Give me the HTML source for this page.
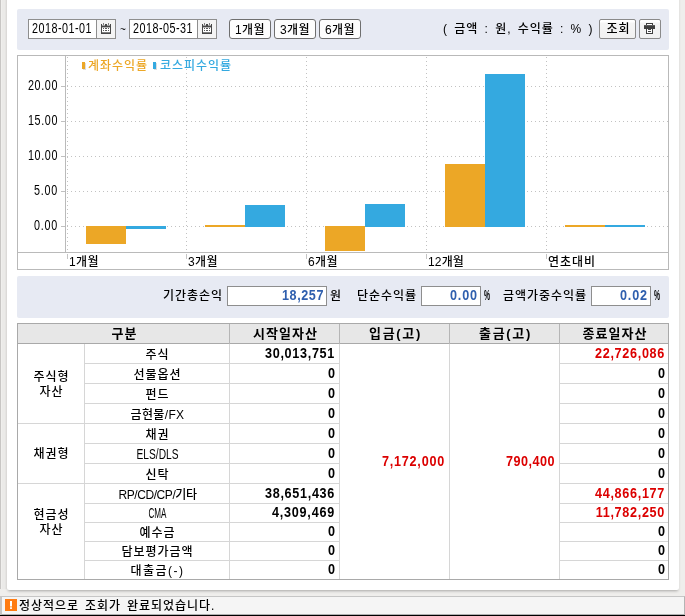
<!DOCTYPE html>
<html lang="ko">
<head>
<meta charset="utf-8">
<title>수익률 조회</title>
<style>
*{box-sizing:border-box;margin:0;padding:0}
html,body{width:685px;height:616px;overflow:hidden;background:#efeeec}
body{position:relative;font:500 12px/14px "Liberation Sans","Noto Sans CJK KR",sans-serif;color:#000;will-change:transform}
.abs,.t,.box,.btn,.bar,.ln,.cal,.dh,.dv,.panel{position:absolute}
.t{white-space:nowrap;height:14px;line-height:14px;letter-spacing:.96px}
.d{font-size:14px}
.b{font-weight:bold}
.h{font-size:13px}
.c{text-align:center}
.r{text-align:right}
.panel{left:17px;width:652px;background:#e7eaf3;border-radius:2px}
.box{background:#fff;border:1px solid #8e8e8e;height:20px}
.btn{height:20px;border:1px solid #6f6f6f;border-radius:3px;background:#fdfdfd}
.btn.g{border-color:#8a8a8a;border-radius:2px;background:linear-gradient(#fff,#fff 2px,#f5f5f5 3px,#f1f1f1)}
.cal{width:19px;height:20px;border:1px solid #8e8e8e;border-left:0;background:#f4f4f4}
.or{background:#eca726}.bl{background:#34a9e0}
.red{color:#dc0000}.blue{color:#2f5fae}
.dh{height:1px;background:repeating-linear-gradient(90deg,#c2c2c2 0,#c2c2c2 1px,transparent 1px,transparent 4px)}
.dv{width:1px;background:repeating-linear-gradient(180deg,#c2c2c2 0,#c2c2c2 1px,transparent 1px,transparent 4px)}
</style>
</head>
<body>
<div class="abs" style="left:7px;top:-6px;width:672px;height:596px;background:#fff;border-radius:2px;box-shadow:0 2px 3px -1px rgba(0,0,0,.3)"></div>
<div class="abs" style="left:0;top:0;width:7px;height:589px;background:linear-gradient(90deg,#c8c6c4 0,#c8c6c4 1px,#f0efed 1px,#f0efed 2px,#ebeae8 2px,#ebeae8 5px,#e5e4e2 5px,#e5e4e2 6px,#dcdad8 6px)"></div>
<div class="abs" style="left:0;top:596px;width:1px;height:20px;background:#c8c6c4"></div>
<div class="panel" style="top:9px;height:41px"></div>
<div class="box" style="left:28px;top:19px;width:69px"></div>
<div class="t d" style="left:32px;top:21px;width:79.92px;letter-spacing:0.63px;transform:scaleX(0.770);transform-origin:0 50%;">2018-01-01</div>
<div class="cal" style="left:97px;top:19px"></div>
<div class="box" style="left:129px;top:19px;width:69px"></div>
<div class="t d" style="left:133px;top:21px;width:79.92px;letter-spacing:0.63px;transform:scaleX(0.770);transform-origin:0 50%;">2018-05-31</div>
<div class="cal" style="left:198px;top:19px"></div>
<svg class="abs" style="left:101px;top:23px" width="10" height="11" viewBox="0 0 10 11"><path fill="#808080" d="M2 0h1v2H2zM7 0h1v2H7z"/><path fill="#484848" d="M0 1h1v1.6h8V1h1v10H0zM4 1h2v2H4z"/><path fill="#fff" d="M1 4.4h8v4.9H1z"/><path fill="#5a5a5a" d="M2 5h1v1H2zM4 5h2v1H4zM7 5h1v1H7zM2 7h1v1H2zM4 7h2v1H4zM7 7h1v1H7z"/></svg>
<svg class="abs" style="left:202px;top:23px" width="10" height="11" viewBox="0 0 10 11"><path fill="#808080" d="M2 0h1v2H2zM7 0h1v2H7z"/><path fill="#484848" d="M0 1h1v1.6h8V1h1v10H0zM4 1h2v2H4z"/><path fill="#fff" d="M1 4.4h8v4.9H1z"/><path fill="#5a5a5a" d="M2 5h1v1H2zM4 5h2v1H4zM7 5h1v1H7zM2 7h1v1H2zM4 7h2v1H4zM7 7h1v1H7z"/></svg>
<div class="t" style="left:120px;top:23px;letter-spacing:0;font-size:10px">~</div>
<div class="btn" style="left:229px;top:19px;width:42px"></div>
<div class="t" style="left:235px;top:23px;letter-spacing:0.42px;">1개월</div>
<div class="btn" style="left:274px;top:19px;width:42px"></div>
<div class="t" style="left:280px;top:23px;letter-spacing:0.42px;">3개월</div>
<div class="btn" style="left:319px;top:19px;width:42px"></div>
<div class="t" style="left:325px;top:23px;letter-spacing:0.42px;">6개월</div>
<div class="t" style="left:443px;top:22px;word-spacing:2px">( 금액 : 원, 수익률 : % )</div>
<div class="btn g" style="left:599px;top:19px;width:37px"></div>
<div class="t c" style="left:600px;top:22px;width:37px;letter-spacing:0.96px;">조회</div>
<div class="btn g" style="left:639px;top:19px;width:22px"></div>
<svg class="abs" style="left:644px;top:23px" width="11" height="11" viewBox="0 0 11 11"><path fill="#404040" d="M2 0h7v2h2v4H9v5H2V6H0V2h2z"/><path fill="#fff" d="M3 1h5v1H3zM3 6h5v4H3z"/><path fill="#464646" d="M4 6h3v1H4zM4 8h3v1H4z"/><path fill="#5c5c5c" d="M0 2h11v1H0z"/></svg>
<div class="abs" style="left:17px;top:55px;width:652px;height:215px;border:1px solid #b9b9b9;background:#fff"></div>
<div class="ln" style="left:65px;top:56px;width:1px;height:197px;background:#bababa"></div>
<div class="ln" style="left:18px;top:252px;width:650px;height:1px;background:#bababa"></div>
<div class="ln" style="left:61px;top:86px;width:4px;height:1px;background:#c0c0c0"></div>
<div class="dh" style="left:67px;top:86px;width:601px"></div>
<div class="t d r" style="left:8px;top:78px;width:50px;letter-spacing:0.79px;transform:scaleX(0.770);transform-origin:100% 50%;">20.00</div>
<div class="ln" style="left:61px;top:121px;width:4px;height:1px;background:#c0c0c0"></div>
<div class="dh" style="left:67px;top:121px;width:601px"></div>
<div class="t d r" style="left:8px;top:113px;width:50px;letter-spacing:0.79px;transform:scaleX(0.770);transform-origin:100% 50%;">15.00</div>
<div class="ln" style="left:61px;top:156px;width:4px;height:1px;background:#c0c0c0"></div>
<div class="dh" style="left:67px;top:156px;width:601px"></div>
<div class="t d r" style="left:8px;top:148px;width:50px;letter-spacing:0.79px;transform:scaleX(0.770);transform-origin:100% 50%;">10.00</div>
<div class="ln" style="left:61px;top:191px;width:4px;height:1px;background:#c0c0c0"></div>
<div class="dh" style="left:67px;top:191px;width:601px"></div>
<div class="t d r" style="left:8px;top:183px;width:50px;letter-spacing:0.98px;transform:scaleX(0.770);transform-origin:100% 50%;">5.00</div>
<div class="ln" style="left:61px;top:226px;width:4px;height:1px;background:#c0c0c0"></div>
<div class="dh" style="left:67px;top:226px;width:601px"></div>
<div class="t d r" style="left:8px;top:218px;width:50px;letter-spacing:0.98px;transform:scaleX(0.770);transform-origin:100% 50%;">0.00</div>
<div class="dv" style="left:67px;top:57px;height:195px"></div>
<div class="ln" style="left:67px;top:254px;width:1px;height:5px;background:#c4c4c4"></div>
<div class="dv" style="left:186px;top:57px;height:195px"></div>
<div class="ln" style="left:186px;top:254px;width:1px;height:5px;background:#c4c4c4"></div>
<div class="dv" style="left:306px;top:57px;height:195px"></div>
<div class="ln" style="left:306px;top:254px;width:1px;height:5px;background:#c4c4c4"></div>
<div class="dv" style="left:426px;top:57px;height:195px"></div>
<div class="ln" style="left:426px;top:254px;width:1px;height:5px;background:#c4c4c4"></div>
<div class="dv" style="left:546px;top:57px;height:195px"></div>
<div class="ln" style="left:546px;top:254px;width:1px;height:5px;background:#c4c4c4"></div>
<div class="bar or" style="left:86px;top:226px;width:40px;height:18px"></div>
<div class="bar bl" style="left:126px;top:226px;width:40px;height:3px"></div>
<div class="bar or" style="left:205px;top:225px;width:40px;height:2px"></div>
<div class="bar bl" style="left:245px;top:205px;width:40px;height:22px"></div>
<div class="bar or" style="left:325px;top:226px;width:40px;height:25px"></div>
<div class="bar bl" style="left:365px;top:204px;width:40px;height:23px"></div>
<div class="bar or" style="left:445px;top:164px;width:40px;height:63px"></div>
<div class="bar bl" style="left:485px;top:74px;width:40px;height:153px"></div>
<div class="bar or" style="left:565px;top:225px;width:40px;height:2px"></div>
<div class="bar bl" style="left:605px;top:225px;width:40px;height:2px"></div>
<div class="t" style="left:69px;top:255px;letter-spacing:0.42px;">1개월</div>
<div class="t" style="left:188px;top:255px;letter-spacing:0.42px;">3개월</div>
<div class="t" style="left:308px;top:255px;letter-spacing:0.42px;">6개월</div>
<div class="t" style="left:428px;top:255px;letter-spacing:0.14px;">12개월</div>
<div class="t" style="left:548px;top:255px;letter-spacing:0.96px;">연초대비</div>
<div class="bar or" style="left:82px;top:62px;width:3px;height:7px;box-shadow:1px 1px 0 #ddd"></div>
<div class="t" style="left:88px;top:59px;letter-spacing:0.96px;color:#eca726">계좌수익률</div>
<div class="bar bl" style="left:153px;top:62px;width:3px;height:7px;box-shadow:1px 1px 0 #ddd"></div>
<div class="t" style="left:160px;top:59px;letter-spacing:0.96px;color:#34a9e0">코스피수익률</div>
<div class="panel" style="top:276px;height:42px"></div>
<div class="t" style="left:163px;top:289px;letter-spacing:0.96px;">기간총손익</div>
<div class="box" style="left:227px;top:286px;width:100px"></div>
<div class="t d r b blue" style="left:227px;top:288px;width:97px;letter-spacing:0.64px;transform:scaleX(0.900);transform-origin:100% 50%;">18,257</div>
<div class="t" style="left:330px;top:289px;letter-spacing:0.96px;">원</div>
<div class="t" style="left:357px;top:289px;letter-spacing:0.96px;">단순수익률</div>
<div class="box" style="left:421px;top:286px;width:60px"></div>
<div class="t d r b blue" style="left:421px;top:288px;width:57px;letter-spacing:0.97px;transform:scaleX(0.900);transform-origin:100% 50%;">0.00</div>
<div class="t d b" style="left:484px;top:288px;width:14.45px;letter-spacing:0px;transform:scaleX(0.482);transform-origin:0 50%;">%</div>
<div class="t" style="left:503px;top:289px;letter-spacing:0.96px;">금액가중수익률</div>
<div class="box" style="left:591px;top:286px;width:60px"></div>
<div class="t d r b blue" style="left:591px;top:288px;width:57px;letter-spacing:0.97px;transform:scaleX(0.900);transform-origin:100% 50%;">0.02</div>
<div class="t d b" style="left:654px;top:288px;width:14.45px;letter-spacing:0px;transform:scaleX(0.482);transform-origin:0 50%;">%</div>
<div class="abs" style="left:17px;top:323px;width:652px;height:257px;border:1px solid #a9a9a9;background:#fff"></div>
<div class="abs" style="left:18px;top:324px;width:650px;height:19px;background:#e7e7e7"></div>
<div class="ln" style="left:18px;top:343px;width:650px;height:1px;background:#a9a9a9"></div>
<div class="ln" style="left:229px;top:324px;width:1px;height:20px;background:#b5b5b5"></div>
<div class="ln" style="left:229px;top:344px;width:1px;height:235px;background:#d6d6d6"></div>
<div class="ln" style="left:339px;top:324px;width:1px;height:20px;background:#b5b5b5"></div>
<div class="ln" style="left:339px;top:344px;width:1px;height:235px;background:#d6d6d6"></div>
<div class="ln" style="left:449px;top:324px;width:1px;height:20px;background:#b5b5b5"></div>
<div class="ln" style="left:449px;top:344px;width:1px;height:235px;background:#d6d6d6"></div>
<div class="ln" style="left:559px;top:324px;width:1px;height:20px;background:#b5b5b5"></div>
<div class="ln" style="left:559px;top:344px;width:1px;height:235px;background:#d6d6d6"></div>
<div class="ln" style="left:84px;top:344px;width:1px;height:235px;background:#d6d6d6"></div>
<div class="ln" style="left:85px;top:363px;width:254px;height:1px;background:#d6d6d6"></div>
<div class="ln" style="left:560px;top:363px;width:108px;height:1px;background:#d6d6d6"></div>
<div class="ln" style="left:85px;top:383px;width:254px;height:1px;background:#d6d6d6"></div>
<div class="ln" style="left:560px;top:383px;width:108px;height:1px;background:#d6d6d6"></div>
<div class="ln" style="left:85px;top:403px;width:254px;height:1px;background:#d6d6d6"></div>
<div class="ln" style="left:560px;top:403px;width:108px;height:1px;background:#d6d6d6"></div>
<div class="ln" style="left:18px;top:423px;width:321px;height:1px;background:#d6d6d6"></div>
<div class="ln" style="left:560px;top:423px;width:108px;height:1px;background:#d6d6d6"></div>
<div class="ln" style="left:85px;top:443px;width:254px;height:1px;background:#d6d6d6"></div>
<div class="ln" style="left:560px;top:443px;width:108px;height:1px;background:#d6d6d6"></div>
<div class="ln" style="left:85px;top:463px;width:254px;height:1px;background:#d6d6d6"></div>
<div class="ln" style="left:560px;top:463px;width:108px;height:1px;background:#d6d6d6"></div>
<div class="ln" style="left:18px;top:483px;width:321px;height:1px;background:#d6d6d6"></div>
<div class="ln" style="left:560px;top:483px;width:108px;height:1px;background:#d6d6d6"></div>
<div class="ln" style="left:85px;top:503px;width:254px;height:1px;background:#d6d6d6"></div>
<div class="ln" style="left:560px;top:503px;width:108px;height:1px;background:#d6d6d6"></div>
<div class="ln" style="left:85px;top:522px;width:254px;height:1px;background:#d6d6d6"></div>
<div class="ln" style="left:560px;top:522px;width:108px;height:1px;background:#d6d6d6"></div>
<div class="ln" style="left:85px;top:541px;width:254px;height:1px;background:#d6d6d6"></div>
<div class="ln" style="left:560px;top:541px;width:108px;height:1px;background:#d6d6d6"></div>
<div class="ln" style="left:85px;top:560px;width:254px;height:1px;background:#d6d6d6"></div>
<div class="ln" style="left:560px;top:560px;width:108px;height:1px;background:#d6d6d6"></div>
<div class="t c b h" style="left:19px;top:327px;width:211px;letter-spacing:1.04px;">구분</div>
<div class="t c b h" style="left:231px;top:327px;width:109px;letter-spacing:1.04px;">시작일자산</div>
<div class="t c b h" style="left:341px;top:327px;width:109px;letter-spacing:1.69px;">입금(고)</div>
<div class="t c b h" style="left:451px;top:327px;width:109px;letter-spacing:1.69px;">출금(고)</div>
<div class="t c b h" style="left:561px;top:327px;width:108px;letter-spacing:1.04px;">종료일자산</div>
<div class="t c" style="left:85px;top:348px;width:145px;letter-spacing:0.96px;">주식</div>
<div class="t d r b" style="left:230px;top:346px;width:105px;letter-spacing:0.77px;transform:scaleX(0.900);transform-origin:100% 50%;">30,013,751</div>
<div class="t d r b red" style="left:560px;top:346px;width:105px;letter-spacing:0.77px;transform:scaleX(0.900);transform-origin:100% 50%;">22,726,086</div>
<div class="t c" style="left:85px;top:368px;width:145px;letter-spacing:0.96px;">선물옵션</div>
<div class="t d r b" style="left:230px;top:366px;width:105px;letter-spacing:-0.01px;transform:scaleX(0.900);transform-origin:100% 50%;">0</div>
<div class="t d r b" style="left:560px;top:366px;width:105px;letter-spacing:-0.01px;transform:scaleX(0.900);transform-origin:100% 50%;">0</div>
<div class="t c" style="left:85px;top:388px;width:145px;letter-spacing:0.96px;">펀드</div>
<div class="t d r b" style="left:230px;top:386px;width:105px;letter-spacing:-0.01px;transform:scaleX(0.900);transform-origin:100% 50%;">0</div>
<div class="t d r b" style="left:560px;top:386px;width:105px;letter-spacing:-0.01px;transform:scaleX(0.900);transform-origin:100% 50%;">0</div>
<div class="t c" style="left:85px;top:408px;width:145px;letter-spacing:0.37px;">금현물/FX</div>
<div class="t d r b" style="left:230px;top:406px;width:105px;letter-spacing:-0.01px;transform:scaleX(0.900);transform-origin:100% 50%;">0</div>
<div class="t d r b" style="left:560px;top:406px;width:105px;letter-spacing:-0.01px;transform:scaleX(0.900);transform-origin:100% 50%;">0</div>
<div class="t c" style="left:85px;top:428px;width:145px;letter-spacing:0.96px;">채권</div>
<div class="t d r b" style="left:230px;top:426px;width:105px;letter-spacing:-0.01px;transform:scaleX(0.900);transform-origin:100% 50%;">0</div>
<div class="t d r b" style="left:560px;top:426px;width:105px;letter-spacing:-0.01px;transform:scaleX(0.900);transform-origin:100% 50%;">0</div>
<div class="t d c" style="left:85px;top:447px;width:145px;letter-spacing:0px;transform:scaleX(0.729);transform-origin:50% 50%;">ELS/DLS</div>
<div class="t d r b" style="left:230px;top:446px;width:105px;letter-spacing:-0.01px;transform:scaleX(0.900);transform-origin:100% 50%;">0</div>
<div class="t d r b" style="left:560px;top:446px;width:105px;letter-spacing:-0.01px;transform:scaleX(0.900);transform-origin:100% 50%;">0</div>
<div class="t c" style="left:85px;top:468px;width:145px;letter-spacing:0.96px;">신탁</div>
<div class="t d r b" style="left:230px;top:466px;width:105px;letter-spacing:-0.01px;transform:scaleX(0.900);transform-origin:100% 50%;">0</div>
<div class="t d r b" style="left:560px;top:466px;width:105px;letter-spacing:-0.01px;transform:scaleX(0.900);transform-origin:100% 50%;">0</div>
<div class="t c" style="left:85px;top:488px;width:145px;letter-spacing:-0.43px;">RP/CD/CP/기타</div>
<div class="t d r b" style="left:230px;top:486px;width:105px;letter-spacing:0.77px;transform:scaleX(0.900);transform-origin:100% 50%;">38,651,436</div>
<div class="t d r b red" style="left:560px;top:486px;width:105px;letter-spacing:0.77px;transform:scaleX(0.900);transform-origin:100% 50%;">44,866,177</div>
<div class="t d c" style="left:85px;top:506px;width:145px;letter-spacing:0px;transform:scaleX(0.579);transform-origin:50% 50%;">CMA</div>
<div class="t d r b" style="left:230px;top:505px;width:105px;letter-spacing:0.86px;transform:scaleX(0.900);transform-origin:100% 50%;">4,309,469</div>
<div class="t d r b red" style="left:560px;top:505px;width:105px;letter-spacing:0.77px;transform:scaleX(0.900);transform-origin:100% 50%;">11,782,250</div>
<div class="t c" style="left:85px;top:526px;width:145px;letter-spacing:0.96px;">예수금</div>
<div class="t d r b" style="left:230px;top:524px;width:105px;letter-spacing:-0.01px;transform:scaleX(0.900);transform-origin:100% 50%;">0</div>
<div class="t d r b" style="left:560px;top:524px;width:105px;letter-spacing:-0.01px;transform:scaleX(0.900);transform-origin:100% 50%;">0</div>
<div class="t c" style="left:85px;top:545px;width:145px;letter-spacing:0.96px;">담보평가금액</div>
<div class="t d r b" style="left:230px;top:543px;width:105px;letter-spacing:-0.01px;transform:scaleX(0.900);transform-origin:100% 50%;">0</div>
<div class="t d r b" style="left:560px;top:543px;width:105px;letter-spacing:-0.01px;transform:scaleX(0.900);transform-origin:100% 50%;">0</div>
<div class="t c" style="left:85px;top:564px;width:145px;letter-spacing:1.48px;">대출금(-)</div>
<div class="t d r b" style="left:230px;top:562px;width:105px;letter-spacing:-0.01px;transform:scaleX(0.900);transform-origin:100% 50%;">0</div>
<div class="t d r b" style="left:560px;top:562px;width:105px;letter-spacing:-0.01px;transform:scaleX(0.900);transform-origin:100% 50%;">0</div>
<div class="t c" style="left:18px;top:370px;width:67px;letter-spacing:0.96px;">주식형</div>
<div class="t c" style="left:18px;top:385px;width:67px;letter-spacing:0.96px;">자산</div>
<div class="t c" style="left:18px;top:447px;width:67px;letter-spacing:0.96px;">채권형</div>
<div class="t c" style="left:18px;top:508px;width:67px;letter-spacing:0.96px;">현금성</div>
<div class="t c" style="left:18px;top:523px;width:67px;letter-spacing:0.96px;">자산</div>
<div class="t d r b red" style="left:340px;top:454px;width:105px;letter-spacing:0.86px;transform:scaleX(0.900);transform-origin:100% 50%;">7,172,000</div>
<div class="t d r b red" style="left:450px;top:454px;width:105px;letter-spacing:0.55px;transform:scaleX(0.900);transform-origin:100% 50%;">790,400</div>
<div class="abs" style="left:1px;top:596px;width:684px;height:19px;background:#f5f5f5;border:1px solid #c6c6c6;border-right-color:#b4b4b4;border-bottom-color:#b0b0b0"></div>
<div class="abs" style="left:0;top:615px;width:685px;height:1px;background:#000"></div>
<svg class="abs" style="left:5px;top:599px" width="12" height="12" viewBox="0 0 12 12"><rect width="12" height="12" fill="#ff7c12"/><rect x="5" y="2" width="2" height="5.5" fill="#fff"/><rect x="5" y="8.3" width="2" height="1.6" fill="#fff"/></svg>
<div class="t" style="left:19px;top:599px;word-spacing:1.7px">정상적으로 조회가 완료되었습니다.</div>
</body>
</html>
